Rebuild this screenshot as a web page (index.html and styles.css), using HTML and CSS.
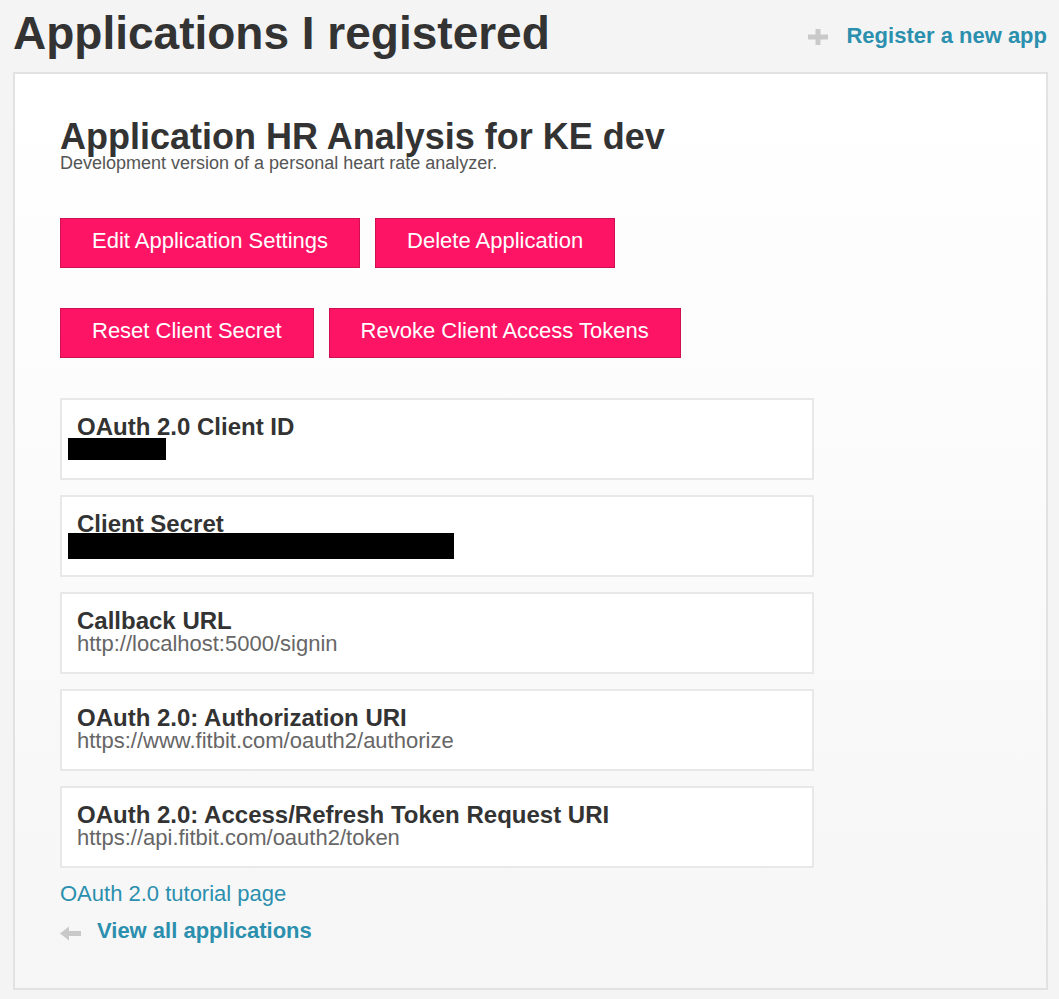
FILE: index.html
```html
<!DOCTYPE html>
<html lang="en">
<head>
<meta charset="utf-8">
<title>Applications I registered</title>
<link rel="stylesheet" href="styles.css">
</head>
<body>
<header class="page-header">
  <h1 class="page-title">Applications I registered</h1>
  <a class="register-link" href="#">
    <svg class="plus-icon" width="20" height="16" viewBox="0 0 20 16" aria-hidden="true">
      <rect x="0" y="5.5" width="20" height="5" fill="#c9c9c9"/>
      <rect x="7.5" y="0" width="5" height="16" fill="#c9c9c9"/>
    </svg>
    <span>Register a new app</span>
  </a>
</header>

<main class="panel">
  <h2 class="app-title">Application HR Analysis for KE dev</h2>
  <p class="app-desc">Development version of a personal heart rate analyzer.</p>

  <div class="btn-row first">
    <a class="btn" href="#">Edit Application Settings</a>
    <a class="btn" href="#">Delete Application</a>
  </div>
  <div class="btn-row">
    <a class="btn" href="#">Reset Client Secret</a>
    <a class="btn" href="#">Revoke Client Access Tokens</a>
  </div>

  <div class="info-list">
    <div class="info-box">
      <div class="info-label">OAuth 2.0 Client ID</div>
      <div class="info-value"><span class="redact redact-id"></span></div>
    </div>
    <div class="info-box">
      <div class="info-label">Client Secret</div>
      <div class="info-value"><span class="redact redact-secret"></span></div>
    </div>
    <div class="info-box">
      <div class="info-label">Callback URL</div>
      <div class="info-value">http://localhost:5000/signin</div>
    </div>
    <div class="info-box">
      <div class="info-label">OAuth 2.0: Authorization URI</div>
      <div class="info-value">https://www.fitbit.com/oauth2/authorize</div>
    </div>
    <div class="info-box">
      <div class="info-label">OAuth 2.0: Access/Refresh Token Request URI</div>
      <div class="info-value">https://api.fitbit.com/oauth2/token</div>
    </div>
  </div>

  <a class="tutorial-link" href="#">OAuth 2.0 tutorial page</a>
  <a class="back-link" href="#">
    <svg class="arrow-icon" width="21" height="15" viewBox="0 0 21 15" aria-hidden="true">
      <polygon points="0,7.5 9,0.5 9,14.5" fill="#c9c9c9"/>
      <rect x="8" y="5" width="13" height="5" fill="#c9c9c9"/>
    </svg>
    <span>View all applications</span>
  </a>
</main>
</body>
</html>
```

FILE: styles.css
```css
html, body {
  margin: 0;
  padding: 0;
}

body {
  background: #f4f4f4;
  font-family: "Liberation Sans", Arial, Helvetica, sans-serif;
  color: #333;
  width: 1059px;
  min-height: 999px;
}

a {
  text-decoration: none;
}

.page-header {
  display: flex;
  justify-content: space-between;
  align-items: flex-start;
  padding: 10px 12px 0 13px;
  height: 62px;
}

.page-title {
  margin: 0;
  font-size: 46px;
  line-height: 46px;
  font-weight: bold;
  color: #333;
}

.register-link {
  display: flex;
  align-items: center;
  gap: 18px;
  margin-top: 15px;
  font-size: 22px;
  line-height: 22px;
  font-weight: bold;
  color: #2b8fae;
}

.plus-icon {
  display: block;
  margin-top: 2px;
}

.panel {
  display: block;
  margin-left: 13px;
  width: 1035px;
  box-sizing: border-box;
  border: 2px solid #e2e2e2;
  background: linear-gradient(#ffffff, #f6f6f6);
  padding: 45px 0 46px 45px;
}

.app-title {
  margin: 0;
  font-size: 36px;
  line-height: 36px;
  font-weight: bold;
  color: #333;
}

.app-desc {
  margin: 0;
  font-size: 18px;
  line-height: 16px;
  color: #555;
}

.btn-row {
  display: flex;
  gap: 15px;
  margin-top: 40px;
}

.btn-row.first {
  margin-top: 47px;
}

.btn {
  display: block;
  background: #fd1465;
  border: 1px solid #cf0f4f;
  color: #fff;
  font-size: 22px;
  line-height: 22px;
  padding: 11px 31px 15px;
}

.info-list {
  display: flex;
  flex-direction: column;
  gap: 15px;
  margin-top: 40px;
  width: 754px;
}

.info-box {
  background: #fff;
  border: 2px solid #e8e8e8;
  padding: 15px 15px 17px;
}

.info-label {
  font-size: 24px;
  line-height: 24px;
  font-weight: bold;
  color: #333;
}

.info-value {
  font-size: 22px;
  line-height: 22px;
  height: 22px;
  color: #666;
}

.redact {
  display: inline-block;
  background: #000;
  vertical-align: top;
  margin-left: -9px;
}

.redact-id {
  width: 98px;
  height: 22px;
  margin-top: -1px;
}

.redact-secret {
  width: 386px;
  height: 26px;
  margin-top: -3px;
  margin-bottom: -1px;
}

.tutorial-link {
  display: block;
  margin-top: 15px;
  font-size: 22px;
  line-height: 22px;
  color: #2b8fae;
  width: max-content;
}

.back-link {
  display: flex;
  align-items: center;
  gap: 16px;
  margin-top: 15px;
  font-size: 22px;
  line-height: 22px;
  font-weight: bold;
  color: #2b8fae;
  width: max-content;
}

.arrow-icon {
  display: block;
  margin-top: 4px;
}
```
